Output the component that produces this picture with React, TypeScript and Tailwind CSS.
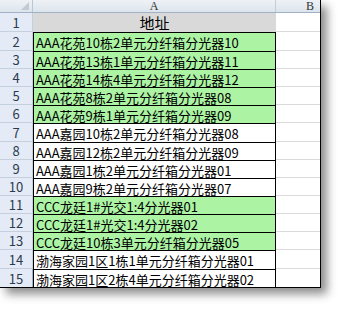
import React from "react";

const rows = [
  { text: "AAA花苑10栋2单元分纤箱分光器10", green: true, h: 19 },
  { text: "AAA花苑13栋1单元分纤箱分光器11", green: true, h: 18 },
  { text: "AAA花苑14栋4单元分纤箱分光器12", green: true, h: 18 },
  { text: "AAA花苑8栋2单元分纤箱分光器08", green: true, h: 18 },
  { text: "AAA花苑9栋1单元分纤箱分光器09", green: true, h: 18 },
  { text: "AAA嘉园10栋2单元分纤箱分光器08", green: false, h: 19 },
  { text: "AAA嘉园12栋2单元分纤箱分光器09", green: false, h: 18 },
  { text: "AAA嘉园1栋2单元分纤箱分光器01", green: false, h: 18 },
  { text: "AAA嘉园9栋2单元分纤箱分光器07", green: false, h: 18 },
  { text: "CCC龙廷1#光交1:4分光器01", green: true, h: 18 },
  { text: "CCC龙廷1#光交1:4分光器02", green: true, h: 18 },
  { text: "CCC龙廷10栋3单元分纤箱分光器05", green: true, h: 18 },
  { text: "渤海家园1区1栋1单元分纤箱分光器01", green: false, h: 19 },
  { text: "渤海家园1区2栋4单元分纤箱分光器02", green: false, h: 18 },
];

const font = { fontFamily: '"Noto Sans CJK SC", "Liberation Sans", sans-serif' };

const App = () => {
  return (
    <main className="w-[342px] h-[309px] bg-white overflow-hidden" style={font}>
      <div className="w-[321px] border-r border-b border-black shadow-[6px_6px_9px_rgba(0,0,0,0.45)]">
        {/* column headers */}
        <div className="grid grid-cols-[33px_243px_44px] h-[13px] bg-gradient-to-b from-[#eef2f6] to-[#dde4ec] border-b border-[#9fb1c6] text-[#333] text-[12px] leading-none">
          <div className="relative border-r border-[#b9c6d5]">
            <div className="absolute right-[3px] bottom-[2px] w-0 h-0 border-l-[8px] border-l-transparent border-b-[8px] border-b-[#c3cad3]" />
          </div>
          <div className="flex items-center justify-center border-r border-[#c2cdd9]" style={{ fontFamily: '"Liberation Serif", serif' }}>
            A
          </div>
          <div className="flex items-center justify-end pr-[6px]" style={{ fontFamily: '"Liberation Serif", serif' }}>
            B
          </div>
        </div>

        {/* row 1 */}
        <div className="grid grid-cols-[33px_243px_44px] h-[19px]">
          <div className="flex items-center justify-center bg-[#e4ebf6] border-r border-[#9eb3cc] border-b border-[#c4d0de] text-[13px] leading-none text-[#2b3a4e]">
            1
          </div>
          <div className="flex items-center justify-center bg-[#d9d9d9] text-[15px] leading-none text-black">
            地址
          </div>
          <div className="border-b border-[#dadada]" />
        </div>

        {rows.map((row, i) => (
          <div
            key={i}
            className="grid grid-cols-[33px_243px_44px]"
            style={{ height: row.h }}
          >
            <div
              className={
                "flex items-center justify-center bg-[#e4ebf6] border-r border-[#9eb3cc] text-[13px] leading-none text-[#2b3a4e] " +
                (i < rows.length - 1 ? "border-b border-[#c4d0de]" : "")
              }
            >
              {i + 2}
            </div>
            <div
              className={
                "flex items-center pl-[2px] pt-[1px] border-t border-x border-black text-[13px] leading-none text-black whitespace-nowrap " +
                (row.green ? "bg-[#acf4a4]" : "bg-white")
              }
            >
              {row.text}
            </div>
            <div className={i < rows.length - 1 ? "border-b border-[#dadada]" : ""} />
          </div>
        ))}
      </div>
    </main>
  );
};

export default App;
